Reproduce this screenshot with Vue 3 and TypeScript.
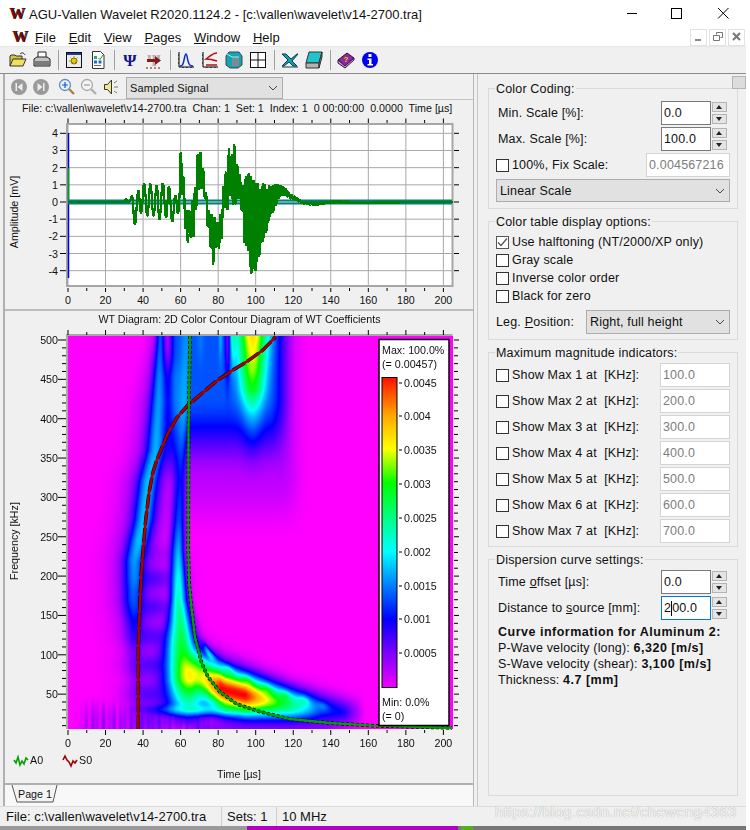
<script setup lang="ts">
import { onMounted, ref } from 'vue'

type Pt = [number, number]

const xOf = (t: number) => 68 + t * 1.877
const yAmp = (a: number) => 202 - a * 17.17
const yFreq = (f: number) => 340 + (500 - f) * 0.787

const range = (from: number, to: number, step: number) => {
  const out: number[] = []
  for (let v = from; v <= to + 1e-6; v += step) out.push(v)
  return out
}

const tab = (rows: Pt[], v: number) => {
  if (v <= rows[0][0]) return rows[0][1]
  for (let i = 1; i < rows.length; i++) {
    if (v <= rows[i][0]) {
      const k = (v - rows[i - 1][0]) / (rows[i][0] - rows[i - 1][0])
      return rows[i - 1][1] + k * (rows[i][1] - rows[i - 1][1])
    }
  }
  return rows[rows.length - 1][1]
}

const headerText = 'File: c:\\vallen\\wavelet\\v14-2700.tra  Chan: 1  Set: 1  Index: 1  0 00:00:00  0.0000  Time [µs]'
const timeTicks = range(0, 200, 10)
const timeLabels = range(0, 200, 20)
const ampLabels = range(-4, 4, 1)
const freqMinor = range(10, 500, 10)
const freqLabels = range(50, 500, 50)

const maxRows = [100, 200, 300, 400, 500, 600, 700].map((v, i) => ({ n: i + 1, value: v.toFixed(1) }))
const legendTicks = [
  ['0.0045', 383], ['0.004', 416], ['0.0035', 450], ['0.003', 484], ['0.0025', 518],
  ['0.002', 552], ['0.0015', 586], ['0.001', 619], ['0.0005', 653]
] as [string, number][]

// upper and lower limit of the signal per µs
const envelope: [number, number, number][] = [
  [30, 0.05, -0.05], [33, 0.4, 0], [35, 0.3, -1.3], [37, 0.5, -1.3], [39, 1.3, -0.6], [41, 1, -0.8],
  [44, 1.05, -0.8], [46, 0.9, -0.8], [48, 1, -1.3], [50, 1.1, -0.6], [53, 1, -1], [55, 0.7, -1],
  [57, 0.3, -1.5], [59, 1, -0.5], [60, 3, 0.2], [61, 2.3, 0.5], [62, 0.8, -0.5], [63, -0.5, -2.6],
  [65, -0.5, -2.1], [67, 0.5, -2], [68, 1, -1], [69, 2.8, 0.8], [70, 2.5, 0.7], [71, 3.1, 0.8],
  [72, 2, 0.7], [73, 1, 0.2], [74, 0.2, -1], [75, -0.5, -2], [76, -0.5, -2.7], [77, -0.8, -4],
  [78, -0.8, -3], [79, -1.5, -2.6], [80, -1, -2.7], [81, -0.7, -2.8], [82, -1, -2], [83, 1.5, -0.5],
  [84, 1.8, 0], [85, 1.5, -0.5], [86, 3.8, 0.6], [87, 2.5, 0], [88, 3.9, -0.2], [89, 3, -0.3],
  [90, 2.2, 0.2], [91, 2.2, 0.2], [92, 1.2, -0.4], [93, 0.9, -0.6], [94, 1.3, -2.5], [96, 1.7, -2.6],
  [97, 1.7, -3.9], [98, 1.2, -4.3], [99, 1.3, -3.5], [100, 1, -4.1], [101, 1.2, -3.2], [102, 0.6, -3.3],
  [103, 0.9, -2.3], [104, 1.1, -2.3], [105, 1, -1.8], [106, 0.6, -1.7], [107, 1, -1], [108, 0.9, -0.7],
  [110, 1, -0.5], [112, 1, 0.2], [114, 0.9, 0.4], [116, 0.8, 0.4], [118, 0.5, 0.2], [120, 0.35, 0.2],
  [122, 0.25, 0.1], [124, 0.05, -0.05], [126, 0, -0.1], [128, -0.05, -0.15], [132, -0.1, -0.18],
  [136, -0.05, -0.1], [140, 0.05, -0.05], [150, 0.05, -0.05]
]

const signalPoints = (() => {
  const up = envelope.map((e) => [e[0], e[1]] as Pt)
  const low = envelope.map((e) => [e[0], e[2]] as Pt)
  const pts: string[] = [`${xOf(0)},${yAmp(0)}`, `${xOf(30)},${yAmp(0)}`]
  let phase = 0
  for (let t = 30; t <= 150; t += 0.1) {
    const period = t < 60 ? 3.3 : t < 94 ? 1.5 : t < 110 ? 0.75 : 1.5
    const sharp = t < 60 ? 0.8 : t < 94 ? 0.55 : 0.3
    phase += (0.1 / period) * Math.PI * 2
    const s = Math.sin(phase)
    const hi = tab(up, t)
    const lo = tab(low, t)
    const v = (hi + lo) / 2 + ((hi - lo) / 2) * Math.sign(s) * Math.pow(Math.abs(s), sharp)
    pts.push(`${xOf(t).toFixed(1)},${yAmp(v).toFixed(1)}`)
  }
  pts.push(`${xOf(205)},${yAmp(0)}`)
  return pts.join(' ')
})()

const s0Curve = [
  [138.3, 729], [138.3, 650], [140, 600], [141.7, 567], [143.3, 548], [145.7, 520], [149, 493], [152.5, 474],
  [156.5, 461], [161, 450], [167, 435], [176.7, 418], [188, 405], [200, 395], [216.7, 380.7], [233, 370], [246.7, 361.7],
  [263, 350], [275.7, 336.7]
].join(' ')
const a0Curve = [
  [190, 336], [189.5, 370], [188.5, 430], [188.3, 550], [189, 583], [191.7, 610], [195, 637], [201.7, 663],
  [208, 677], [220, 692], [236.7, 704], [260, 711.7], [290, 719], [330, 723], [373, 725.7], [452, 728]
].join(' ')

const cmap: [number, number, number, number][] = [
  [0, 255, 0, 255], [0.11, 128, 0, 255], [0.22, 0, 0, 255], [0.33, 0, 128, 255], [0.44, 0, 255, 255],
  [0.55, 0, 255, 128], [0.66, 0, 255, 0], [0.77, 255, 255, 0], [0.875, 255, 170, 0], [1, 255, 0, 0]
]

const colorAt = (v: number): [number, number, number] => {
  const c = Math.min(1, Math.max(0, v))
  for (let i = 1; i < cmap.length; i++) {
    if (c <= cmap[i][0]) {
      const k = (c - cmap[i - 1][0]) / (cmap[i][0] - cmap[i - 1][0])
      return [1, 2, 3].map((j) => cmap[i - 1][j] + k * (cmap[i][j] - cmap[i - 1][j])) as [number, number, number]
    }
  }
  return [255, 0, 0]
}

const gauss = (d: number, w: number) => Math.exp(-(d * d) / (w * w))
const smooth = (a: number, b: number, v: number) => {
  const k = Math.min(1, Math.max(0, (v - a) / (b - a)))
  return k * k * (3 - 2 * k)
}

const ridgeX: Pt[] = [[335, 186], [400, 184], [450, 181], [550, 178], [600, 178], [650, 182], [680, 186], [729, 190]]
const ridgeAmp: Pt[] = [[335, 0.18], [430, 0.24], [480, 0.22], [520, 0.28], [560, 0.4], [600, 0.5], [640, 0.6], [680, 0.64], [700, 0.5], [716, 0.2], [729, 0.02]]
const ridgeWL: Pt[] = [[335, 8], [600, 8.5], [620, 12], [650, 18], [680, 22]]
const ridgeWR: Pt[] = [[335, 5], [550, 6], [600, 9], [650, 14], [700, 20]]
const lobeY: Pt[] = [[180, 672], [195, 672], [210, 682], [225, 690], [245, 695], [265, 699], [290, 704], [320, 708], [345, 712]]
const lobeAmp: Pt[] = [[165, 0], [180, 0.34], [195, 0.62], [207, 0.8], [220, 1], [245, 1], [265, 0.78], [280, 0.64], [300, 0.48], [320, 0.28], [345, 0.17], [365, 0]]
const lobeH: Pt[] = [[180, 26], [205, 24], [225, 22], [250, 20], [300, 16], [345, 14]]
const beadY: Pt[] = [[195, 635], [210, 655], [225, 668], [243, 678], [260, 686], [285, 695], [310, 702], [340, 711]]
const beadAmp: Pt[] = [[190, 0], [205, 0.36], [300, 0.32], [345, 0.08], [360, 0]]
const leftX: Pt[] = [[335, 160], [400, 158], [450, 155], [480, 148], [520, 143], [560, 134], [600, 133], [650, 135], [729, 140]]
const leftAmp: Pt[] = [[335, 0.2], [400, 0.24], [480, 0.27], [540, 0.27], [600, 0.2], [650, 0.08], [729, 0.03]]
const leftW: Pt[] = [[335, 4], [400, 8], [480, 10], [560, 10]]
const plumeLobeAmp: Pt[] = [[335, 0.76], [370, 0.66], [390, 0.56], [400, 0.44], [415, 0.3], [430, 0.2], [460, 0.06], [490, 0]]
const plumeLobeW: Pt[] = [[335, 18], [400, 15], [430, 13]]

const field = (X: number, Y: number) => {
  const dA = X - tab(ridgeX, Y)
  const a = tab(ridgeAmp, Y) * gauss(dA, dA < 0 ? tab(ridgeWL, Y) : tab(ridgeWR, Y))

  const b = tab(lobeAmp, X) * gauss(Y - tab(lobeY, X), tab(lobeH, X))
  const bead = tab(beadAmp, X) * (0.7 + 0.3 * Math.cos((X / 19) * Math.PI * 2)) * gauss(Y - tab(beadY, X), 6)
  const band = tab([[120, 0], [150, 0.14], [165, 0.24], [175, 0.32], [200, 0.36], [225, 0.3], [260, 0.12], [300, 0]], X) * gauss(Y - 709, 7)

  const dL = X - tab(leftX, Y)
  const lw = tab(leftW, Y)
  const l = tab(leftAmp, Y) * (gauss(dL, lw) + 0.42 * gauss(dL, lw * 2.4))

  const top = 1 - smooth(395, 480, Y)
  let plume = 0.23 * smooth(163, 176, X) * (1 - smooth(268, 296, X)) * top + 0.06 * (1 - smooth(470, 545, Y)) * smooth(160, 180, X) * (1 - smooth(280, 310, X))
  plume *= 1 - 0.7 * gauss(X - 227, 2.5) * gauss(Y - 335, 40)
  plume *= 1 - 0.8 * gauss(X - 165, 3) * gauss(Y - 340, 35)
  const fill = 0.17 * gauss(X - 170, 14) * (1 - smooth(440, 500, Y)) * (Y > 380 ? 1 : smooth(340, 380, Y))
  const streaks = gauss(Y - 335, 36) * (0.36 * gauss(X - 233, 3.5) + 0.22 * gauss(X - 220, 2.5) + 0.14 * gauss(X - 200, 5))
  const plumeLobe = tab(plumeLobeAmp, Y) * gauss(X - 252, tab(plumeLobeW, Y))

  const spots = 0.8 + 0.2 * Math.cos(Y / 4.6)
  const purple = 0.14 * spots * gauss(X - 152, 26) * smooth(520, 580, Y) * (1 - smooth(700, 729, Y) * 0.4)
  const stripes = smooth(690, 722, Y) * (1 - smooth(195, 240, X)) * 0.1 * (0.55 + 0.45 * Math.sin(X * 0.9) * Math.sin(X * 0.23)) * smooth(70, 95, X)
  const floor = 0.09 * gauss(Y - 728, 9) * (1 - smooth(320, 350, X)) * smooth(180, 200, X)

  return Math.hypot(a, b, bead, band, l, plume, fill, streaks, plumeLobe, purple, stripes, floor)
}

const heat = ref<HTMLCanvasElement | null>(null)

onMounted(() => {
  const canvas = heat.value
  const ctx = canvas?.getContext('2d')
  if (!canvas || !ctx) return
  const img = ctx.createImageData(canvas.width, canvas.height)
  for (let y = 0; y < canvas.height; y++) {
    for (let x = 0; x < canvas.width; x++) {
      const c = colorAt(field(x + 68, y + 336))
      const i = (y * canvas.width + x) * 4
      img.data[i] = c[0]
      img.data[i + 1] = c[1]
      img.data[i + 2] = c[2]
      img.data[i + 3] = 255
    }
  }
  ctx.putImageData(img, 0, 0)
})
</script>

<template>
  <div class="desk">
    <div class="titlebar">
      <span class="logo">W</span>
      <span class="titlebar__text">AGU-Vallen Wavelet R2020.1124.2 - [c:\vallen\wavelet\v14-2700.tra]</span>
      <div class="caption">
        <svg width="46" height="28" viewBox="0 0 46 28"><path d="M2 13.500h10" stroke="#000" /></svg>
        <svg width="46" height="28" viewBox="0 0 46 28"><rect x="0.500" y="8.500" width="10" height="10" fill="none" stroke="#000" /></svg>
        <svg width="30" height="28" viewBox="0 0 30 28"><path d="M1 8l10.500 10.500M11.500 8L1 18.500" stroke="#000" fill="none" /></svg>
      </div>
    </div>

    <div class="menubar">
      <span class="logo logo--menu">W</span>
      <span class="menu"><u>F</u>ile</span>
      <span class="menu"><u>E</u>dit</span>
      <span class="menu"><u>V</u>iew</span>
      <span class="menu"><u>P</u>ages</span>
      <span class="menu"><u>W</u>indow</span>
      <span class="menu"><u>H</u>elp</span>
      <div class="mdi">
        <span class="mdi__btn"><svg width="10" height="10" viewBox="0 0 10 10"><rect x="1" y="7" width="6" height="2" fill="#8a8a8a" /></svg></span>
        <span class="mdi__btn"><svg width="10" height="10" viewBox="0 0 10 10"><path d="M3.500 2.500V.5h6v5h-2M.5 3.500h6v5h-6z" fill="none" stroke="#777" /></svg></span>
        <span class="mdi__btn"><svg width="10" height="10" viewBox="0 0 10 10"><path d="M1 1l7 7M8 1L1 8" stroke="#777" stroke-width="2" /></svg></span>
      </div>
    </div>

    <div class="toolbar">
      <svg class="tb" viewBox="0 0 18 18"><path d="M1 15V5l1-1h4l1 1h6v3" fill="#d8c040" stroke="#333" /><path d="M1 15l3-7h13l-3 7z" fill="#f0e060" stroke="#333" /><path d="M11 3c2-2 4-1 5 1" fill="none" stroke="#222" /></svg>
      <svg class="tb" viewBox="0 0 18 18"><path d="M5 1h8v6H5z" fill="#fff" stroke="#222" /><path d="M1 8l3-2h10l3 2v7H1z" fill="#c4c4c4" stroke="#222" /><path d="M2 11h14M2 13h14" stroke="#333" /></svg>
      <i class="tb-sep"></i>
      <svg class="tb" viewBox="0 0 18 18"><rect x="1.500" y="1.500" width="15" height="15" fill="#ececec" stroke="#111" /><rect x="2" y="2" width="14" height="2" fill="#1c3a9c" /><circle cx="9" cy="10" r="3" fill="#e8d000" stroke="#7a6a00" /><path d="M9 5v10M4 10h10M5.500 6.500l7 7M12.500 6.500l-7 7" stroke="#a89400" stroke-dasharray="1.500 5" /></svg>
      <svg class="tb" viewBox="0 0 18 18"><path d="M3.500.5h8l3.500 3.500v13.500h-11.500z" fill="#fff" stroke="#333" /><rect x="5" y="5" width="3" height="3" fill="#2a7" /><rect x="5" y="9.500" width="3" height="3" fill="#26c" /><rect x="9.500" y="9.500" width="3" height="3" fill="#26c" /><path d="M9.500 7l1.500 1.500L14 4" stroke="#0a0" fill="none" /><path d="M5 14.500h7" stroke="#666" /></svg>
      <i class="tb-sep"></i>
      <svg class="tb" viewBox="0 0 18 18"><text x="9" y="15" class="tb-psi">Ψ</text></svg>
      <svg class="tb" viewBox="0 0 18 18"><text x="9" y="15" class="tb-psi tb-psi--gray">Ψ</text><path d="M2 8h8V5l6 4.500-6 4.500v-3H2z" fill="#8a1818" /><path d="M1 17h16" stroke="#7a1010" stroke-dasharray="2 2" /></svg>
      <i class="tb-sep"></i>
      <svg class="tb" viewBox="0 0 18 18"><path d="M2 1v15h15M1 4h1M1 8h1M1 12h1M6 17v-1M10 17v-1M14 17v-1" stroke="#000" fill="none" /><path d="M3 15c3 0 3-2 4-6s1-6 2-6 1 3 2 7 2 5 5 5" stroke="#1030c0" stroke-width="1.500" fill="none" /></svg>
      <svg class="tb" viewBox="0 0 18 18"><path d="M2 1v15h15M1 4h1M1 8h1M1 12h1M6 17v-1M10 17v-1M14 17v-1" stroke="#000" fill="none" /><path d="M16 2c-4 0-7 3-11 6 4 0 8 1 11 2M5 14h11" stroke="#b01010" stroke-width="1.500" fill="none" /></svg>
      <svg class="tb" viewBox="0 0 18 18"><path d="M4 1h10l3 4v9l-4 3H5l-4-3V5z" fill="#14a4b4" stroke="#444" /><path d="M7 6h7v9H7z" fill="#7e8a92" /><path d="M2 3l5 3h7" fill="none" stroke="#7ff" /></svg>
      <svg class="tb" viewBox="0 0 18 18"><rect x="1.500" y="1.500" width="15" height="15" fill="#fff" stroke="#111" /><path d="M9 1.500v15M1.500 9h15" stroke="#111" /></svg>
      <i class="tb-sep"></i>
      <svg class="tb" viewBox="0 0 18 18"><path d="M1 3h4l5 5 6-5h1l-6 7 5 5h-4l-4-4-5 4H1l6-6z" fill="#12a0a8" stroke="#0b3c55" /><path d="M1 16h16" stroke="#0b3c55" /></svg>
      <svg class="tb" viewBox="0 0 18 18"><path d="M4 1h13l-3 11H1z" fill="#22c4cc" stroke="#333" /><path d="M1 12h13v5H1z" fill="#b4b4b4" stroke="#333" /><path d="M14 12l3-11v5l-3 11z" fill="#8a8a8a" stroke="#333" /></svg>
      <i class="tb-sep"></i>
      <svg class="tb" viewBox="0 0 18 18"><path d="M1 9l9-7 7 5-9 8z" fill="#8a2a9c" stroke="#3a0a4c" /><path d="M1 9v3l7 5 9-8V7l-9 8z" fill="#c8a8d0" stroke="#3a0a4c" /><text x="9" y="11" class="tb-q">?</text></svg>
      <svg class="tb" viewBox="0 0 18 18"><circle cx="9" cy="9" r="8" fill="#0000f0" /><rect x="7.500" y="3" width="3" height="3" fill="#fff" /><path d="M6.500 7.500h4V13h1.500v1.500H6.500V13H8V9H6.500z" fill="#fff" /></svg>
    </div>

    <div class="main">
      <div class="left">
        <div class="subbar">
          <span class="roundbtn"><svg width="10" height="10" viewBox="0 0 10 10"><path d="M1.500 1h1.500v8H1.500zM8.500 1v8L3.500 5z" fill="#ededed" /></svg></span>
          <span class="roundbtn"><svg width="10" height="10" viewBox="0 0 10 10"><path d="M1.500 1v8L6.500 5zM7 1h1.500v8H7z" fill="#ededed" /></svg></span>
          <svg class="subicon" viewBox="0 0 18 18"><circle cx="7" cy="7" r="5.500" fill="#e8f2ff" stroke="#5b8bd0" stroke-width="1.300" /><path d="M7 4v6M4 7h6" stroke="#2050d0" stroke-width="1.200" /><path d="M11 11l5 5" stroke="#b08040" stroke-width="2.400" /></svg>
          <svg class="subicon" viewBox="0 0 18 18"><circle cx="7" cy="7" r="5.500" fill="#f4f4f4" stroke="#a8a8a8" stroke-width="1.300" /><path d="M4 7h6" stroke="#999" stroke-width="1.200" /><path d="M11 11l5 5" stroke="#b0b0b0" stroke-width="2.400" /></svg>
          <svg class="subicon subicon--speaker" viewBox="0 0 18 18"><path d="M1.500 6.500h3l4-4.500v14l-4-4.500h-3z" fill="#f0e890" stroke="#333" /><path d="M11 5l3-2M11 9h4M11 13l3 2" stroke="#777" /></svg>
          <div class="combo combo--signal">Sampled Signal<svg class="chev" width="10" height="6" viewBox="0 0 10 6"><path d="M1 1l4 4 4-4" fill="none" stroke="#444" /></svg></div>
        </div>

        <svg class="chart-top" viewBox="5 100 468 210" width="468" height="210">
          <text x="22" y="112" class="lbl pre">{{ headerText }}</text>
          <rect x="67.500" y="124.500" width="385" height="161" fill="#fff" />
          <g stroke="#a8a8a8">
            <path v-for="t in timeLabels" :key="t" :d="`M${xOf(t)} 124V286`" />
            <path v-for="a in ampLabels" :key="a" :d="`M67 ${yAmp(a)}H452`" />
          </g>
          <rect x="67" y="124" width="385.500" height="162" fill="none" stroke="#a6a6a6" stroke-width="2" />
          <g stroke="#000">
            <template v-for="t in timeTicks" :key="t">
              <path :d="`M${xOf(t)} ${t % 20 ? 120 : 118.500}V123`" />
              <path :d="`M${xOf(t)} 288V${t % 20 ? 291 : 292}`" />
            </template>
            <template v-for="a in ampLabels" :key="a">
              <path :d="`M60 ${yAmp(a)}H66`" />
              <path :d="`M454 ${yAmp(a)}H459`" />
            </template>
          </g>
          <path d="M68.500 133V278" stroke="#0000e0" stroke-width="1.500" />
          <path d="M68.500 168V200" stroke="#00a000" stroke-width="1.500" />
          <path d="M68 200.500H452M68 203.500H452" stroke="#008080" stroke-width="2" />
          <path d="M68 202H130M303 202H452" stroke="#007f3c" stroke-width="2" />
          <polyline :points="signalPoints" fill="none" stroke="#008000" stroke-width="2.200" stroke-linejoin="bevel" shape-rendering="crispEdges" />
          <text v-for="t in timeLabels" :key="t" :x="xOf(t)" y="304" class="lbl mid">{{ t }}</text>
          <text v-for="a in ampLabels" :key="a" x="58" :y="yAmp(a) + 4" class="lbl end">{{ a }}</text>
          <text transform="translate(18 212) rotate(-90)" class="lbl mid">Amplitude [mV]</text>
        </svg>

        <div class="chart-wrap">
          <canvas ref="heat" class="heat" width="385" height="393"></canvas>
          <svg class="chart-bottom" viewBox="5 311 468 472" width="468" height="472">
            <defs>
              <linearGradient id="scale" x1="0" y1="1" x2="0" y2="0">
                <stop offset="0" stop-color="#f000ff" />
                <stop offset="0.11" stop-color="#8000ff" />
                <stop offset="0.22" stop-color="#0000ff" />
                <stop offset="0.33" stop-color="#0080ff" />
                <stop offset="0.44" stop-color="#00ffff" />
                <stop offset="0.55" stop-color="#00ff80" />
                <stop offset="0.66" stop-color="#00ff00" />
                <stop offset="0.77" stop-color="#ffff00" />
                <stop offset="0.875" stop-color="#ffaa00" />
                <stop offset="1" stop-color="#ff1000" />
              </linearGradient>
            </defs>
            <text x="239.500" y="323" class="lbl mid">WT Diagram: 2D Color Contour Diagram of WT Coefficients</text>
            <path d="M67 729V335H452.500" fill="none" stroke="#a8a8a8" stroke-width="2" />
            <polyline :points="s0Curve" fill="none" stroke="#000" stroke-width="3.500" stroke-dasharray="14 3" />
            <polyline :points="s0Curve" fill="none" stroke="#a80000" stroke-width="2.600" />
            <polyline :points="a0Curve" fill="none" stroke="#000" stroke-width="3.500" stroke-dasharray="3 2" />
            <polyline :points="a0Curve" fill="none" stroke="#00a000" stroke-width="2.300" />

            <rect x="379" y="339.500" width="70" height="386" fill="#fff" stroke="#000" stroke-width="1.500" />
            <rect x="382" y="377.500" width="15" height="310" fill="url(#scale)" stroke="#000" />
            <text x="382" y="354" class="lbl">Max: 100.0%</text>
            <text x="382" y="368" class="lbl">(= 0.00457)</text>
            <text x="382" y="706" class="lbl">Min: 0.0%</text>
            <text x="382" y="720" class="lbl">(= 0)</text>
            <template v-for="row in legendTicks" :key="row[0]">
              <path :d="`M399 ${row[1]}h3`" stroke="#000" />
              <text x="404" :y="row[1] + 4" class="lbl">{{ row[0] }}</text>
            </template>

            <g stroke="#000">
              <template v-for="t in timeTicks" :key="t">
                <path :d="`M${xOf(t)} ${t % 20 ? 332 : 330}V335`" />
                <path :d="`M${xOf(t)} 730V${t % 20 ? 733 : 735}`" />
              </template>
              <template v-for="f in freqMinor" :key="f">
                <path :d="`M${f % 50 ? 62 : 58} ${yFreq(f)}H66`" />
                <path :d="`M454 ${yFreq(f)}H${f % 50 ? 458 : 459}`" />
              </template>
            </g>
            <text v-for="t in timeLabels" :key="t" :x="xOf(t)" y="747" class="lbl mid">{{ t }}</text>
            <text v-for="f in freqLabels" :key="f" x="58" :y="yFreq(f) + 4" class="lbl end">{{ f }}</text>
            <text transform="translate(18 541) rotate(-90)" class="lbl mid">Frequency [kHz]</text>
            <path d="M14 760l2 3 2-6 2 8 2-4 2 3 2-6 2 2" fill="none" stroke="#00a000" stroke-width="1.600" />
            <text x="30" y="764" class="lbl">A0</text>
            <path d="M63 760l2-4 2 4 2 2 2 4 2-5 2 2 2-3" fill="none" stroke="#a00000" stroke-width="1.600" />
            <text x="79" y="764" class="lbl">S0</text>
            <text x="239" y="778" class="lbl mid">Time [µs]</text>
          </svg>
        </div>

        <div class="tabs">
          <svg width="60" height="20" viewBox="0 0 60 20">
            <path d="M2 0l5 17h36l4-17" fill="#f4f4f4" stroke="#555" />
            <text x="8" y="13" class="tab-lbl">Page 1</text>
          </svg>
        </div>
      </div>

      <div class="splitter"></div>

      <div class="right">
        <span class="corner"></span>

        <section class="group group--color">
          <h4 class="group__title">Color Coding:</h4>
          <div class="row">
            <label class="row__label">Min. Scale [%]:</label>
            <span class="input input--num">0.0</span>
            <span class="spin"><b class="spin__up"></b><b class="spin__down"></b></span>
          </div>
          <div class="row">
            <label class="row__label">Max. Scale [%]:</label>
            <span class="input input--num">100.0</span>
            <span class="spin"><b class="spin__up"></b><b class="spin__down"></b></span>
          </div>
          <div class="row">
            <i class="check"></i>
            <label>100%, Fix Scale:</label>
            <span class="input input--off input--wide">0.004567216</span>
          </div>
          <div class="combo combo--scale">Linear Scale<svg class="chev" width="10" height="6" viewBox="0 0 10 6"><path d="M1 1l4 4 4-4" fill="none" stroke="#444" /></svg></div>
        </section>

        <section class="group group--table">
          <h4 class="group__title">Color table display options:</h4>
          <div class="opt"><i class="check check--on"><svg width="11" height="11" viewBox="0 0 11 11"><path d="M1 5.500l3 3 6-7" fill="none" stroke="#555" stroke-width="1.300" /></svg></i><label>Use halftoning (NT/2000/XP only)</label></div>
          <div class="opt"><i class="check"></i><label>Gray scale</label></div>
          <div class="opt"><i class="check"></i><label>Inverse color order</label></div>
          <div class="opt"><i class="check"></i><label>Black for zero</label></div>
          <div class="row row--legpos">
            <label>Leg. <u>P</u>osition:</label>
            <div class="combo combo--pos">Right, full height<svg class="chev" width="10" height="6" viewBox="0 0 10 6"><path d="M1 1l4 4 4-4" fill="none" stroke="#444" /></svg></div>
          </div>
        </section>

        <section class="group group--max">
          <h4 class="group__title">Maximum magnitude indicators:</h4>
          <div v-for="m in maxRows" :key="m.n" class="row">
            <i class="check"></i>
            <label>Show Max {{ m.n }} at&nbsp; [KHz]:</label>
            <span class="input input--off input--max">{{ m.value }}</span>
          </div>
        </section>

        <section class="group group--disp">
          <h4 class="group__title">Dispersion curve settings:</h4>
          <div class="row">
            <label class="row__label">Time <u>o</u>ffset [µs]:</label>
            <span class="input input--num">0.0</span>
            <span class="spin"><b class="spin__up"></b><b class="spin__down"></b></span>
          </div>
          <div class="row">
            <label class="row__label">Distance to <u>s</u>ource [mm]:</label>
            <span class="input input--num input--focus">2<i class="caret"></i>00.0</span>
            <span class="spin"><b class="spin__up"></b><b class="spin__down"></b></span>
          </div>
          <div class="info">
            <strong>Curve information for Aluminum 2:</strong>
            <p>P-Wave velocity (long): <strong>6,320 [m/s]</strong></p>
            <p>S-Wave velocity (shear): <strong>3,100 [m/s]</strong></p>
            <p>Thickness: <strong>4.7 [mm]</strong></p>
          </div>
        </section>
      </div>
    </div>

    <div class="status">
      <span class="status__cell status__cell--file">File: c:\vallen\wavelet\v14-2700.tra</span>
      <span class="status__cell status__cell--sets">Sets: 1</span>
      <span class="status__cell">10 MHz</span>
    </div>
    <div class="strip"></div>
    <span class="watermark">https://blog.csdn.net/cheweng4363</span>
  </div>
</template>

<style>
body {
  margin: 0;
  background: #fff;
}
</style>

<style scoped>
.desk {
  position: relative;
  width: 750px;
  height: 830px;
  overflow: hidden;
  background: linear-gradient(90deg, #d9d9d9 0 3px, #fff 3px 100%);
  font-family: 'Liberation Sans', Arial, sans-serif;
  font-size: 13px;
  color: #111;
}

.titlebar {
  display: flex;
  align-items: center;
  width: 746px;
  height: 28px;
  background: #fff;
  box-sizing: border-box;
}

.logo {
  width: 29px;
  padding-left: 9px;
  box-sizing: border-box;
  font: 700 16px/1 'Liberation Serif', serif;
  color: #7c0a0a;
  text-shadow: 1px 0 0 #000;
}

.titlebar__text {
  font-size: 13px;
}

.caption {
  display: flex;
  margin-left: auto;
  margin-right: -1px;
}

.menubar {
  display: flex;
  align-items: center;
  width: 746px;
  height: 18px;
  background: #fff;
  font-size: 13px;
}

.logo--menu {
  width: 35px;
  padding-left: 12px;
}

.menu {
  margin-right: 12.700px;
}

.mdi {
  display: flex;
  gap: 2px;
  margin-left: auto;
  margin-right: 1px;
}

.mdi__btn {
  display: flex;
  align-items: center;
  justify-content: center;
  width: 17px;
  height: 17px;
  border: 1px solid #e2e2e2;
  box-sizing: border-box;
}

.toolbar {
  display: flex;
  align-items: center;
  width: 746px;
  height: 27px;
  padding-left: 9px;
  box-sizing: border-box;
  background: #f0f0f0;
  border-top: 1px solid #e6e6e6;
}

.tb {
  width: 18px;
  height: 18px;
  margin: 0 3px;
}

.tb:first-child {
  margin-left: 0;
}

.tb-sep {
  width: 1px;
  height: 20px;
  margin: 0 3.500px;
  background: #a0a0a0;
}

.tb-psi {
  font: 700 17px 'Liberation Serif', serif;
  text-anchor: middle;
  fill: #12128c;
}

.tb-psi--gray {
  fill: #b0b0b0;
}

.tb-q {
  font: 700 8px 'Liberation Sans', sans-serif;
  text-anchor: middle;
  fill: #f0d000;
}

.main {
  display: flex;
  width: 746px;
  height: 733px;
  border-top: 1px solid #8c8c8c;
  box-sizing: border-box;
  background: #f0f0f0;
}

.left {
  display: flex;
  flex-direction: column;
  width: 471px;
  margin-left: 3px;
  box-sizing: border-box;
  border-left: 2px solid #b0b0b0;
  border-right: 1px solid #b8b8b8;
}

.subbar {
  display: flex;
  align-items: center;
  height: 26px;
  padding-left: 6px;
  box-sizing: border-box;
  border-bottom: 1px solid #c4c4c4;
}

.roundbtn {
  display: flex;
  align-items: center;
  justify-content: center;
  width: 16px;
  height: 16px;
  margin-right: 6px;
  border-radius: 50%;
  background: #9a9a9a;
}

.subicon {
  width: 18px;
  height: 18px;
  margin-left: 3px;
  margin-right: 1px;
}

.subicon--speaker {
  margin-left: 4px;
}

.combo {
  display: flex;
  align-items: center;
  height: 23px;
  padding-left: 3px;
  box-sizing: border-box;
  background: #e1e1e1;
  border: 1px solid #adadad;
}

.combo--signal {
  width: 157px;
  height: 22px;
  margin-left: 4px;
  margin-top: 2px;
  font-size: 11px;
  letter-spacing: 0.1px;
}

.chev {
  margin-left: auto;
  margin-right: 4px;
}

.chart-top,
.chart-bottom {
  display: block;
}

.chart-wrap {
  position: relative;
  height: 472px;
  border-top: 2px solid #bcbcbc;
  margin-top: -1px;
  border-bottom: 2px solid #b0b0b0;
}

.heat {
  position: absolute;
  left: 63px;
  top: 25px;
  width: 385px;
  height: 393px;
}

.chart-bottom {
  position: absolute;
  left: 0;
  top: 0;
}

.lbl {
  font: 10.700px 'Liberation Sans', Arial, sans-serif;
  fill: #111;
}

.pre {
  white-space: pre;
}

.mid {
  text-anchor: middle;
}

.end {
  text-anchor: end;
}

.tabs {
  flex: 1;
  padding-left: 5px;
  background: #f8f8f8;
}

.tabs svg {
  display: block;
}

.tab-lbl {
  font: 10.700px 'Liberation Sans', Arial, sans-serif;
  fill: #111;
}

.splitter {
  width: 4px;
  border-right: 1px solid #c8c8c8;
  box-sizing: border-box;
}

.right {
  position: relative;
  width: 268px;
  padding-top: 14px;
  padding-left: 10px;
  box-sizing: border-box;
  font-size: 12.500px;
  letter-spacing: 0.17px;
}

.corner {
  position: absolute;
  right: 0;
  top: 2px;
  width: 12px;
  height: 11px;
  background: #dcdcdc;
  border: 1px solid #b4b4b4;
}

.group {
  display: flex;
  flex-direction: column;
  width: 250px;
  margin-bottom: 12px;
  padding: 0 7px;
  box-sizing: border-box;
  border: 1px solid #dadada;
}

.group--color {
  height: 121px;
  gap: 2px;
}

.group--table {
  height: 119px;
}

.group--max {
  height: 195px;
  gap: 2px;
}

.group--disp {
  height: 237px;
  gap: 2px;
}

.group__title {
  flex: none;
  align-self: flex-start;
  height: 16px;
  margin: -8px 0 3px -1px;
  padding: 0 1px;
  background: #f0f0f0;
  font-size: 12.500px;
  font-weight: 400;
  line-height: 16px;
}

.group--color .group__title {
  margin-bottom: 2px;
}

.group--max .group__title,
.group--disp .group__title {
  margin-bottom: 0;
}

.row {
  display: flex;
  align-items: center;
  flex: none;
  height: 24px;
}

.row__label {
  padding-left: 2px;
}

.input {
  display: flex;
  align-items: center;
  height: 24px;
  padding-left: 2px;
  box-sizing: border-box;
  background: #fff;
  border: 1px solid #7a7a7a;
}

.input--num {
  width: 50px;
  margin-left: auto;
}

.input--off {
  border-color: #d4d4d4;
  color: #7d7d7d;
}

.input--wide {
  width: 84px;
  margin-left: auto;
}

.input--max {
  width: 70px;
  margin-left: auto;
}

.input--focus {
  border-color: #0078d7;
}

.caret {
  width: 1px;
  height: 15px;
  background: #000;
}

.spin {
  display: flex;
  flex-direction: column;
  gap: 2px;
  width: 15px;
  margin-left: 1px;
  margin-right: 3px;
}

.spin b {
  position: relative;
  display: block;
  height: 10px;
  background: #e4e4e4;
  border: 1px solid #b4b4b4;
  box-sizing: border-box;
}

.spin b::after {
  content: '';
  position: absolute;
  left: 3px;
  top: 2px;
  border-left: 3.500px solid transparent;
  border-right: 3.500px solid transparent;
}

.spin__up::after {
  border-bottom: 4px solid #222;
}

.spin__down::after {
  border-top: 4px solid #222;
}

.check {
  display: flex;
  flex: none;
  align-items: center;
  justify-content: center;
  width: 13px;
  height: 13px;
  margin-right: 3px;
  background: #fff;
  border: 1px solid #333;
  box-sizing: border-box;
}

.check--on {
  border-color: #555;
}

.opt {
  display: flex;
  align-items: center;
  flex: none;
  height: 18px;
}

.combo--scale {
  width: 234px;
}

.row--legpos {
  margin-top: 5px;
}

.combo--pos {
  width: 144px;
  height: 24px;
  margin-left: auto;
}

.info {
  margin-top: 2px;
  padding-left: 2px;
  line-height: 16px;
}

.info strong {
  font-weight: 700;
  letter-spacing: 0.5px;
}

.info p {
  margin: 0;
}

.status {
  display: flex;
  align-items: center;
  width: 746px;
  height: 20px;
  background: #f0f0f0;
  border-top: 1px solid #dcdcdc;
  box-sizing: border-box;
  font-size: 13px;
  white-space: nowrap;
}

.status__cell {
  padding-left: 5px;
  line-height: 19px;
}

.status__cell--file {
  width: 222px;
  padding-left: 6px;
  box-sizing: border-box;
  border-right: 1px solid #d0d0d0;
}

.status__cell--sets {
  width: 55px;
  box-sizing: border-box;
  border-right: 1px solid #d0d0d0;
}

.strip {
  height: 4px;
  background: linear-gradient(90deg, #9a9a9a 0 247px, #b000c0 247px 458px, #777 458px 461px, #50b020 461px 473px, #777 473px 746px, #fff 746px);
}

.watermark {
  position: absolute;
  left: 495px;
  top: 803px;
  font-size: 15px;
  letter-spacing: 0.3px;
  color: rgba(255, 255, 255, 0.9);
  text-shadow: 0 0 1px #8c8c8c;
  white-space: nowrap;
}
</style>
